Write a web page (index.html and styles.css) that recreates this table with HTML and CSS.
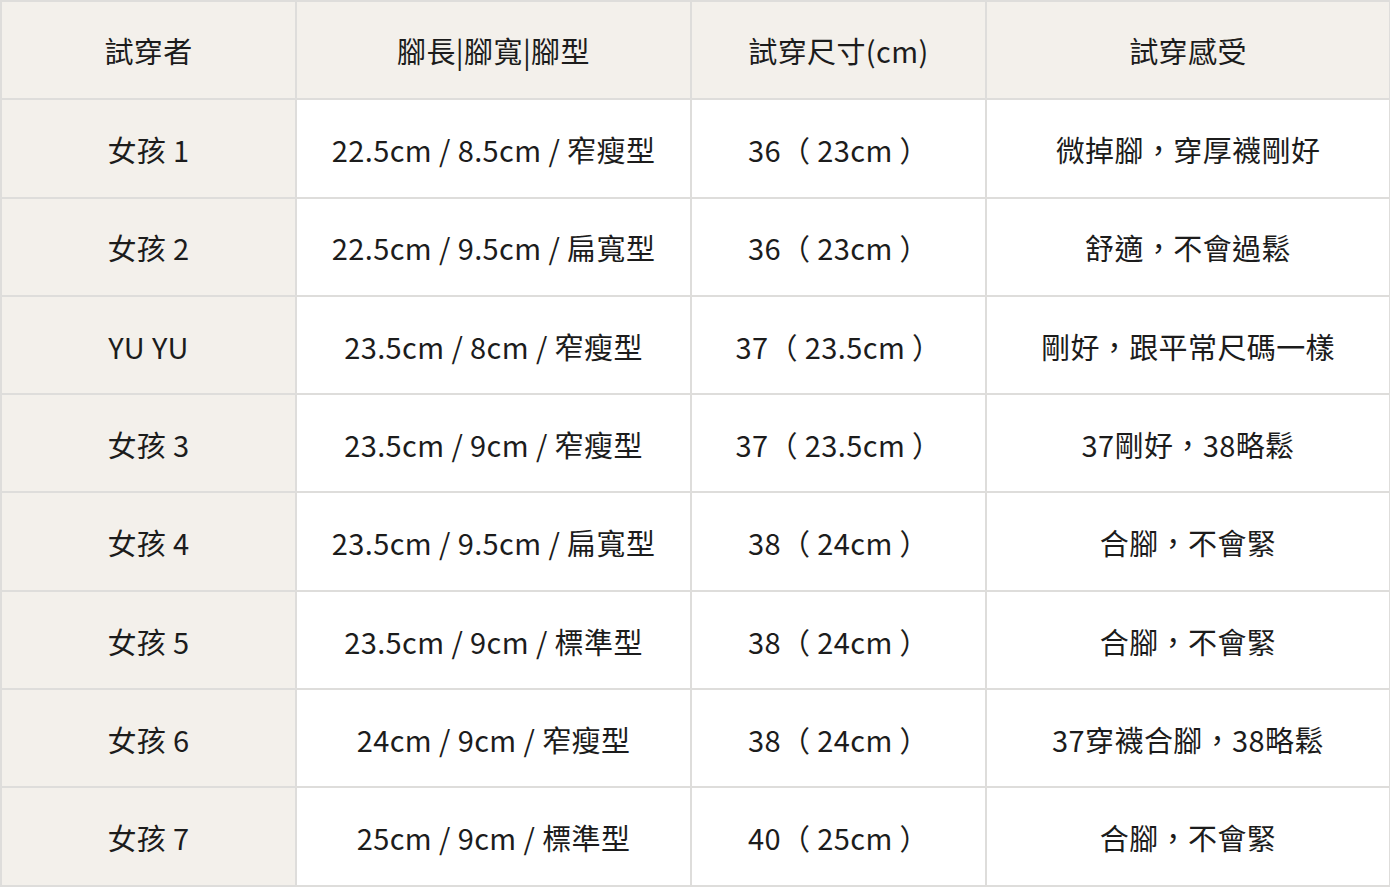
FILE: index.html
```html
<!DOCTYPE html>
<html lang="zh-Hant">
<head>
<meta charset="utf-8">
<title>試穿表</title>
<link rel="stylesheet" href="styles.css">
</head>
<body>
<table class="fit-table">
  <colgroup>
    <col class="c1"><col class="c2"><col class="c3"><col class="c4">
  </colgroup>
  <thead>
    <tr><th>試穿者</th><th>腳長|腳寬|腳型</th><th>試穿尺寸(cm)</th><th>試穿感受</th></tr>
  </thead>
  <tbody>
    <tr><th>女孩 1</th><td>22.5cm / 8.5cm / 窄瘦型</td><td>36（ 23cm ）</td><td>微掉腳，穿厚襪剛好</td></tr>
    <tr><th>女孩 2</th><td>22.5cm / 9.5cm / 扁寬型</td><td>36（ 23cm ）</td><td>舒適，不會過鬆</td></tr>
    <tr><th>YU YU</th><td>23.5cm / 8cm / 窄瘦型</td><td>37（ 23.5cm ）</td><td>剛好，跟平常尺碼一樣</td></tr>
    <tr><th>女孩 3</th><td>23.5cm / 9cm / 窄瘦型</td><td>37（ 23.5cm ）</td><td>37剛好，38略鬆</td></tr>
    <tr><th>女孩 4</th><td>23.5cm / 9.5cm / 扁寬型</td><td>38（ 24cm ）</td><td>合腳，不會緊</td></tr>
    <tr><th>女孩 5</th><td>23.5cm / 9cm / 標準型</td><td>38（ 24cm ）</td><td>合腳，不會緊</td></tr>
    <tr><th>女孩 6</th><td>24cm / 9cm / 窄瘦型</td><td>38（ 24cm ）</td><td>37穿襪合腳，38略鬆</td></tr>
    <tr><th>女孩 7</th><td>25cm / 9cm / 標準型</td><td>40（ 25cm ）</td><td>合腳，不會緊</td></tr>
  </tbody>
</table>
</body>
</html>
```
FILE: styles.css
```css
html, body {
  margin: 0;
  padding: 0;
  background: #ffffff;
}
.fit-table {
  border-collapse: collapse;
  table-layout: fixed;
  width: 1389px;
  font-family: "Noto Sans CJK TC", "Noto Sans", sans-serif;
  font-size: 29px;
  letter-spacing: 0.4px;
  color: #1c1c1c;
}
.c1 { width: 295px; }
.c2 { width: 395px; }
.c3 { width: 295px; }
.c4 { width: 404px; }
.fit-table th,
.fit-table td {
  border: 2px solid #dedddb;
  text-align: center;
  vertical-align: middle;
  font-weight: 400;
  padding: 2px 0 0;
  height: 94.3px;
  line-height: 1.2;
}
.fit-table thead th {
  padding: 0;
  height: 96.3px;
}
.fit-table thead th,
.fit-table tbody th {
  background: #f3f0eb;
}
.fit-table td {
  background: #ffffff;
}
```
